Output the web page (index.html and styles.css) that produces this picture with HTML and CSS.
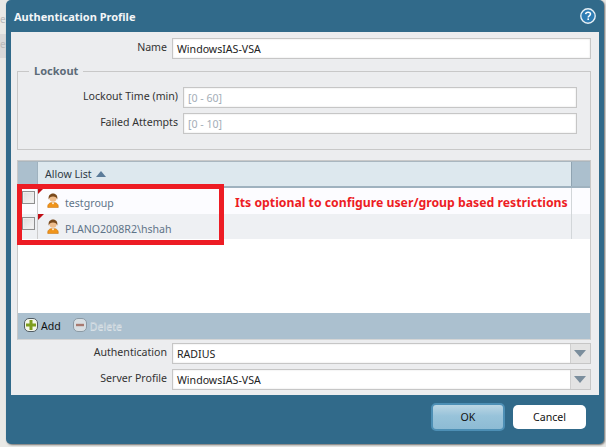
FILE: index.html
```html
<!DOCTYPE html>
<html lang="en">
<head>
<meta charset="utf-8">
<title>Authentication Profile</title>
<link rel="stylesheet" href="styles.css">
</head>
<body>
<div class="backdrop">
  <div class="ghost g1">e</div>
  <div class="ghost g2">e</div>
</div>
<main class="dialog">
  <header class="titlebar">
    <h1 class="title">Authentication Profile</h1>
    <svg class="help" width="16" height="16" viewBox="0 0 16 16">
      <circle cx="8" cy="8" r="7.200" fill="#2f7db4" stroke="#e8f0f5" stroke-width="1.400"/>
      <path d="M5.600 6.200c.2-1.400 1.200-2 2.500-2 1.400 0 2.400.8 2.400 1.900 0 1.900-2.300 1.700-2.300 3.300" fill="none" stroke="#fff" stroke-width="1.500"/>
      <rect x="7.400" y="10.400" width="1.600" height="1.600" fill="#fff"/>
    </svg>
  </header>
  <section class="panel">
    <div class="row">
      <label class="label">Name</label>
      <div class="input">WindowsIAS-VSA</div>
    </div>
    <fieldset class="lockout">
      <legend class="legend">Lockout</legend>
      <div class="row row-inner">
        <label class="label label-inner">Lockout Time (min)</label>
        <div class="input placeholder">[0 - 60]</div>
      </div>
      <div class="row row-inner">
        <label class="label label-inner">Failed Attempts</label>
        <div class="input placeholder">[0 - 10]</div>
      </div>
    </fieldset>
    <div class="grid">
      <div class="grid-head">
        <div class="head-check"></div>
        <div class="head-title">Allow List <span class="sort"></span></div>
        <div class="head-end"></div>
      </div>
      <div class="grid-body">
        <div class="grid-row">
          <div class="cell-check"><span class="checkbox"></span></div>
          <div class="cell-main">
            <span class="flag"></span>
            <svg class="user" width="12" height="15" viewBox="0 0 12 15">
              <path d="M.8 14.600c-.5-3 1.200-5.100 5.200-5.100s5.700 2.100 5.200 5.100z" fill="#f0941a" stroke="#c9760f" stroke-width=".6"/>
              <path d="M4.600 9.600h2.800L6 11.600z" fill="#fff"/>
              <circle cx="6" cy="5" r="3.700" fill="#eebd8c"/>
              <path d="M1.800 6.600C.9 2.600 3.200.4 6 .4s5.100 2.200 4.200 6.200C9.700 4.400 8.500 3.400 6 3.400S2.300 4.400 1.800 6.600z" fill="#7a4a1c"/>
            </svg>
            <span class="user-name">testgroup</span>
          </div>
          <div class="cell-end"></div>
        </div>
        <div class="grid-row alt">
          <div class="cell-check"><span class="checkbox"></span></div>
          <div class="cell-main">
            <span class="flag"></span>
            <svg class="user" width="12" height="15" viewBox="0 0 12 15">
              <path d="M.8 14.600c-.5-3 1.200-5.100 5.200-5.100s5.700 2.100 5.200 5.100z" fill="#f0941a" stroke="#c9760f" stroke-width=".6"/>
              <path d="M4.600 9.600h2.800L6 11.600z" fill="#fff"/>
              <circle cx="6" cy="5" r="3.700" fill="#eebd8c"/>
              <path d="M1.800 6.600C.9 2.600 3.200.4 6 .4s5.100 2.200 4.200 6.200C9.700 4.400 8.500 3.400 6 3.400S2.300 4.400 1.800 6.600z" fill="#7a4a1c"/>
            </svg>
            <span class="user-name">PLANO2008R2\hshah</span>
          </div>
          <div class="cell-end"></div>
        </div>
      </div>
      <div class="toolbar">
        <span class="tool"><span class="tool-icon add-icon"><svg width="10" height="10" viewBox="0 0 10 10"><path d="M5 0v10M0 5h10" stroke="#7f9f1f" stroke-width="3"/></svg></span>Add</span>
        <span class="tool disabled"><span class="tool-icon del-icon"><svg width="8" height="8" viewBox="0 0 8 8"><path d="M0 4h8" stroke="#a87a70" stroke-width="2.400"/></svg></span>Delete</span>
      </div>
    </div>
    <div class="row row-select">
      <label class="label">Authentication</label>
      <div class="input select">RADIUS<span class="arrow"></span></div>
    </div>
    <div class="row row-select">
      <label class="label">Server Profile</label>
      <div class="input select">WindowsIAS-VSA<span class="arrow"></span></div>
    </div>
  </section>
  <footer class="footer">
    <button class="btn ok">OK</button>
    <button class="btn cancel">Cancel</button>
  </footer>
</main>
<div class="callout"></div>
<p class="note">Its optional to configure user/group based restrictions</p>
</body>
</html>
```
FILE: styles.css
```css
* { box-sizing: border-box; }
html, body { margin: 0; padding: 0; }
body {
  position: relative;
  width: 606px;
  height: 447px;
  overflow: hidden;
  background: #e3e3e3;
  font-family: "Noto Sans", "Open Sans", sans-serif;
  font-size: 10.600px;
  color: #333;
}
.backdrop { position: absolute; inset: 0; background: #e9e9e6; }
.ghost { position: absolute; left: 0; width: 6px; color: #bbb; font-size: 10px; line-height: 14px; }
.g1 { top: 12px; }
.g2 { top: 34px; height: 24px; background: #d9d9d9; padding-top: 3px; }
.dialog {
  position: absolute;
  left: 6px;
  top: 0;
  width: 598px;
  height: 444px;
  background: #316a8a;
  border-radius: 5px;
  box-shadow: 1px 1px 2px rgba(60, 60, 60, .7);
  display: flex;
  flex-direction: column;
}
.titlebar {
  height: 32px;
  padding: 0 8px;
  display: flex;
  align-items: center;
  justify-content: space-between;
}
.title { margin: 0; color: #f4f6f8; font-size: 11px; font-weight: 700; }
.panel {
  margin: 0 5px;
  height: 363px;
  background: #ecedef;
  padding: 6px 8px 0 6px;
}
.row { display: flex; align-items: center; height: 21px; }
.label { width: 155px; padding-right: 5px; text-align: right; color: #333; line-height: 15px; margin-top: -2px; flex: none; }
.input {
  flex: 1;
  height: 21px;
  padding: 2px 4px 0;
  background: #fff;
  border: 1px solid #c6c6c6;
  box-shadow: inset 0 0 2px #ddd;
  color: #222;
  line-height: 17px;
  white-space: nowrap;
}
.lockout {
  margin: 5px 0 10px;
  padding: 0 13px 0 0;
  height: 86px;
  border: 1px solid #c8c8c8;
  display: block;
  min-width: 0;
}
.legend { margin-left: 11px; padding: 0 5px; font-weight: 700; color: #5d6b78; font-size: 11px; line-height: 14px; }
.row-inner { margin-bottom: 5px; }
.lockout .legend + .row-inner { margin-top: 9px; }
.label-inner { width: 165px; }
.placeholder { color: #a4aeb8; }
.grid {
  height: 180px;
  border: 1px solid #c8c8c8;
  border-bottom-color: #d5d5d5;
  display: flex;
  flex-direction: column;
  background: #fff;
}
.grid-head { height: 27px; display: flex; background: #dde8ee; border-bottom: 2px solid #9fb2bf; border-top: 1px solid #a9b6bf; flex: none; }
.head-check { width: 20px; background: #abbfcd; border-right: 1px solid #9fb2bf; }
.head-title { flex: 1; padding-left: 7px; line-height: 25px; color: #2f3a44; }
.sort { display: inline-block; width: 0; height: 0; margin-left: 2px; vertical-align: 1px; border: 5px solid transparent; border-top: 0; border-bottom: 6px solid #5b7c9a; }
.head-end { width: 19px; background: #abbfcd; border-left: 1px solid #8fa3b1; }
.grid-body { flex: 1; background: #fff; }
.grid-row { height: 25.500px; display: flex; background: #fcfcff; }
.grid-row.alt { background: #eef0f3; }
.cell-check { width: 20px; padding: 3px 0 0 4px; border-right: 1px solid #ccc; }
.checkbox { display: block; width: 13px; height: 13px; border: 1px solid #8f8f8f; background: linear-gradient(135deg, #ddd, #f6f6f6); box-shadow: inset 0 0 0 1px #eee; }
.cell-main { flex: 1; position: relative; display: flex; align-items: center; padding-left: 9px; }
.flag { position: absolute; left: 0; top: 0; border-top: 6px solid #c00d15; border-right: 6px solid transparent; }
.user { align-self: flex-start; margin: 5px 6px 0 0; flex: none; }
.user-name { color: #5f7488; padding-top: 5px; }
.cell-end { width: 19px; border-left: 1px solid #d2d6d9; }
.toolbar { height: 26px; background: #abc0cf; display: flex; align-items: center; padding-left: 6px; gap: 12px; flex: none; }
.tool { display: flex; align-items: center; color: #111; }
.tool.disabled { color: #c8d3db; text-shadow: 0 1px 0 #dde4e9; }
.tool-icon { width: 14px; height: 14px; border-radius: 5px; border: 1px solid #4f5b63; background: #f4f6ea; display: flex; align-items: center; justify-content: center; margin-right: 3px; margin-top: -3px; }
.del-icon { border-color: #8b9aa5; background: #d9dfe3; }
.row-select { margin-top: 5px; }
.grid + .row-select { margin-top: 3px; }
.select { position: relative; }
.arrow {
  position: absolute;
  right: 0;
  top: 0;
  bottom: 0;
  width: 20px;
  background: #e3e3e3;
  border-left: 1px solid #cfcfcf;
}
.arrow::after {
  content: "";
  position: absolute;
  left: 3px;
  top: 6px;
  border-left: 6px solid transparent;
  border-right: 6px solid transparent;
  border-top: 7px solid #7b8e9d;
}
.footer { flex: 1; display: flex; align-items: center; justify-content: flex-end; gap: 8px; padding: 0 18px 5px 0; }
.btn { font: inherit; color: #111; border-radius: 5px; padding: 0; }
.ok { width: 74px; height: 28px; border: 2px solid #4d8fb5; background: linear-gradient(#bcd6e4, #98c3da 45%, #8dbbd4); }
.cancel { width: 73px; height: 24px; border: 0; background: #fff; }
.callout { position: absolute; left: 17px; top: 184px; width: 207px; height: 61px; border: 5px solid #ed1c24; }
.note { position: absolute; left: 235px; top: 195px; margin: 0; color: #ed1c24; font-weight: 700; font-size: 12.250px; line-height: 16px; white-space: nowrap; }
```
